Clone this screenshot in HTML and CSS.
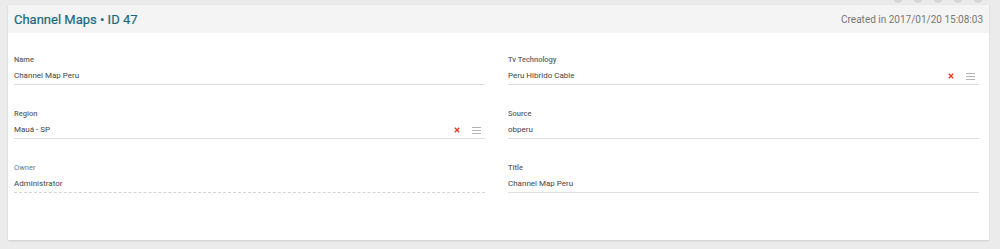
FILE: index.html
```html
<!DOCTYPE html>
<html>
<head>
<meta charset="utf-8">
<link rel="stylesheet" href="styles.css">
</head>
<body>
<div class="toolbar">
  <span class="dot"></span><span class="dot"></span><span class="dot"></span><span class="dot"></span><span class="dot"></span>
</div>
<div class="card">
  <div class="card-header">
    <h1 class="title">Channel Maps • ID 47</h1>
    <span class="created">Created in 2017/01/20 15:08:03</span>
  </div>
  <div class="card-body">
    <div class="field">
      <div class="label">Name</div>
      <div class="value">Channel Map Peru</div>
    </div>
    <div class="field">
      <div class="label">Tv Technology</div>
      <div class="value"><span class="text">Peru Hibrido Cable</span><svg class="clear" viewBox="0 0 6 6" width="6" height="6"><path d="M0.8 0.8L5.2 5.2M5.2 0.8L0.8 5.2"/></svg><span class="menu"><i></i><i></i><i></i></span></div>
    </div>
    <div class="field">
      <div class="label">Region</div>
      <div class="value"><span class="text">Mauá - SP</span><svg class="clear" viewBox="0 0 6 6" width="6" height="6"><path d="M0.8 0.8L5.2 5.2M5.2 0.8L0.8 5.2"/></svg><span class="menu"><i></i><i></i><i></i></span></div>
    </div>
    <div class="field">
      <div class="label">Source</div>
      <div class="value">obperu</div>
    </div>
    <div class="field readonly">
      <div class="label">Owner</div>
      <div class="value">Administrator</div>
    </div>
    <div class="field">
      <div class="label">Title</div>
      <div class="value">Channel Map Peru</div>
    </div>
  </div>
</div>
</body>
</html>
```
FILE: styles.css
```css
html, body {
  margin: 0;
  padding: 0;
}
body {
  background: #ebebeb;
  font-family: Roboto, "Liberation Sans", sans-serif;
  width: 1000px;
  height: 249px;
  overflow: hidden;
  position: relative;
  padding-top: 5px;
  box-sizing: border-box;
}
.toolbar {
  position: absolute;
  top: -7px;
  left: 893px;
  display: flex;
  gap: 10px;
}
.dot {
  width: 10px;
  height: 10px;
  border-radius: 50%;
  background: #d6d6d6;
}
.card {
  margin-left: 8px;
  width: 981px;
  height: 235px;
  background: #fff;
  box-shadow: 0 1px 2px rgba(0,0,0,0.12);
  display: flex;
  flex-direction: column;
}
.card-header {
  height: 28px;
  background: #f4f4f4;
  display: flex;
  align-items: center;
  justify-content: space-between;
  padding: 0 6px;
}
.title {
  margin: 0;
  font-size: 13px;
  font-weight: 400;
  color: #1a6a7c;
  -webkit-text-stroke: 0.2px #1a6a7c;
}
.created {
  font-size: 10px;
  color: #777;
}
.card-body {
  display: grid;
  grid-template-columns: 471px 471px;
  column-gap: 23px;
  padding: 21px 10px 0 6px;
  align-content: start;
}
.field {
  margin-bottom: 23px;
}
.label {
  font-size: 7.5px;
  line-height: 12px;
  font-weight: 500;
  color: #666;
  margin-bottom: 2px;
}
.value {
  font-size: 8px;
  line-height: 16px;
  color: #444;
  border-bottom: 1px solid #dedede;
  display: flex;
  align-items: center;
}
.value .text {
  flex: 1;
}
.readonly .label {
  font-weight: 400;
  color: #777;
}
.readonly .value {
  border-bottom: 1px dashed #d4d4d4;
}
.clear {
  stroke: #ec3b25;
  stroke-width: 1.4;
  fill: none;
  margin-right: 12px;
}
.menu {
  display: flex;
  flex-direction: column;
  gap: 2px;
  width: 9px;
  margin-right: 4px;
}
.menu i {
  display: block;
  height: 1px;
  background: #b5b5b5;
}
```
